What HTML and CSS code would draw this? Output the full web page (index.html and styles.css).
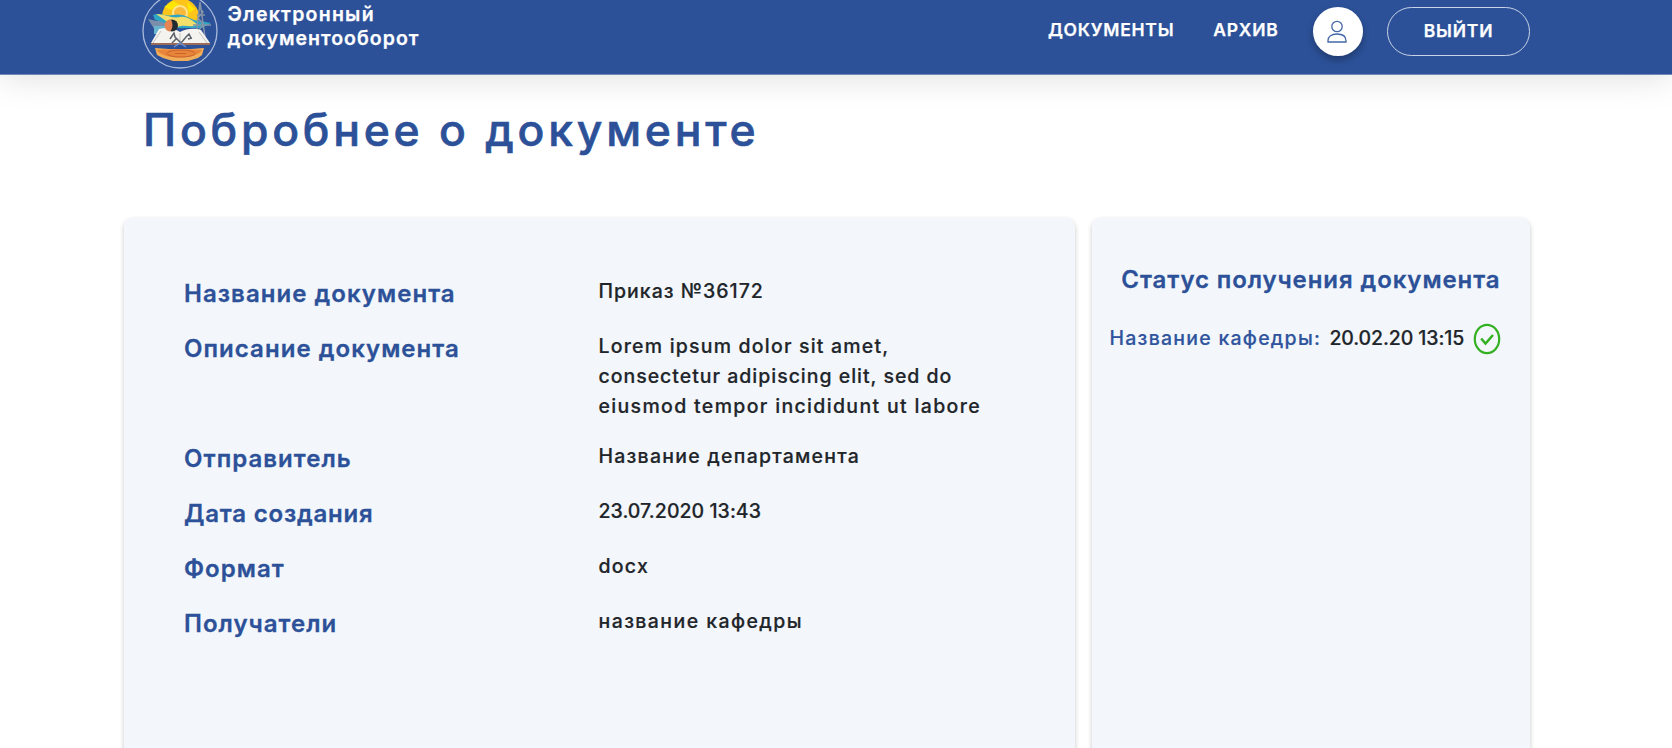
FILE: index.html
```html
<!DOCTYPE html>
<html lang="ru">
<head>
<meta charset="utf-8">
<title>Электронный документооборот</title>
<link rel="stylesheet" href="styles.css">
</head>
<body>
<header class="header">
  <div class="brand">
    <svg class="emblem" width="76" height="76" viewBox="0 0 76 76">
      <circle cx="38" cy="38" r="37" fill="none" stroke="#a9b9da" stroke-width="1.3"/>
      <path d="M20 23a18.500 18.500 0 0 1 37 2l-3 8H24z" fill="#fdc51a"/>
      <path d="M22 14l9-6 7 4-9 5zM45 9l8 7-6 4z" fill="#ffe600"/>
      <circle cx="38" cy="20" r="7" fill="#f9b83a" stroke="#ffe58a" stroke-width="2"/>
      <path d="M6 26l9 2 9-2 5 6-4 7H14z" fill="#7b8faa"/>
      <path d="M11 22c8-3 12 2 20 0 9-2 14 2 21 5l17 3-9 5H42c-6 2-16-5-29-8z" fill="#2fa5c4"/>
      <path d="M14 21c9 0 16 5 24 3 8-1 11 3 18 8-8 3-14-1-20 2-7-1-14-8-22-13z" fill="#f3df69"/>
      <path d="M12 33h15l-3 8H12z" fill="#69b4cf"/>
      <path d="M54 44l4-35 5 35M54 39l8-7-6-7 5-6-4-5M51 32h18M55 22h8" fill="none" stroke="#8593a6" stroke-width="1.500"/>
      <path d="M17 36c8-2 15-1 21 3 7-4 15-4 21-2l9 13H9z" fill="#f4f3ef"/>
      <path d="M38 40v10M19 38l-8 12M57 39l8 11" stroke="#c5c3bf"/>
      <path d="M9 50h59v2H9z" fill="#9b6a58"/>
      <circle cx="30" cy="32.500" r="6" fill="#232b31"/>
      <path d="M29 26.500a6 6 0 0 0-1 12c3-3 3-8 1-12z" fill="#e68452"/>
      <path d="M28 46l4-6 1 4 6 6M39 50l5-6 3-3 2 4M30 50l4-4M46 46l4-1" fill="none" stroke="#5b626a" stroke-width="1.500"/>
      <path d="M32 54l6-4 6 4" fill="none" stroke="#6e91ce" stroke-width="1.500"/>
      <path d="M13 55l14 1h22l13-1-2 7-4 3-10 3H31l-10-3-6-3z" fill="#f0ad5a"/>
      <path d="M15 57c10-1 35-1 45 0-5 10-40 10-45 0z" fill="#e8853a"/>
      <ellipse cx="39" cy="60.500" rx="14" ry="3.500" fill="none" stroke="#c9642b"/>
      <path d="M33 60.500h11" stroke="#cc6429"/>
    </svg>
    <div class="brand-name"><span class="b1">Электронный</span><span class="b2">документооборот</span></div>
  </div>
  <nav class="nav">
    <a class="nav-link">ДОКУМЕНТЫ</a>
    <a class="nav-link archive">АРХИВ</a>
    <a class="avatar">
      <svg width="20" height="24" viewBox="0 0 20 24" fill="none" stroke="#4467a7" stroke-width="1.300">
        <circle cx="10" cy="6.500" r="5.200"/>
        <path d="M1 22v-1.200C1 16.500 4.500 14 10 14s9 2.500 9 6.800V22z"/>
      </svg>
    </a>
    <a class="logout">ВЫЙТИ</a>
  </nav>
</header>
<main class="page">
  <h1 class="title">Побробнее о документе</h1>
  <div class="panels">
    <section class="panel details">
      <div class="row"><div class="label">Название документа</div><div class="value order">Приказ №36172</div></div>
      <div class="row"><div class="label">Описание документа</div><div class="value"><span class="l1">Lorem ipsum dolor sit amet,</span><br><span class="l2">consectetur adipiscing elit, sed do</span><br><span class="l3">eiusmod tempor incididunt ut labore</span></div></div>
      <div class="row"><div class="label">Отправитель</div><div class="value">Название департамента</div></div>
      <div class="row"><div class="label created">Дата создания</div><div class="value date">23.07.2020 13:43</div></div>
      <div class="row"><div class="label">Формат</div><div class="value">docx</div></div>
      <div class="row"><div class="label">Получатели</div><div class="value dept">название кафедры</div></div>
    </section>
    <section class="panel status">
      <h2 class="status-title">Статус получения документа</h2>
      <div class="status-row">
        <span class="status-name">Название кафедры:</span>
        <span class="status-date">20.02.20 13:15</span>
        <svg class="check" width="28" height="32" viewBox="0 0 28 32" fill="none" stroke="#34b022">
          <ellipse cx="14" cy="16" rx="12.200" ry="14.200" stroke-width="2.200"/>
          <path d="M8.200 15.500l4.300 5 7.500-8.500" stroke-width="2.500"/>
        </svg>
      </div>
    </section>
  </div>
</main>
</body>
</html>
```
FILE: styles.css
```css
* { box-sizing: border-box; }
html, body { height: 100%; }
body {
  margin: 0;
  overflow: hidden;
  background: #fff;
  color: #212529;
  font-family: Inter, "Open Sans", sans-serif;
  display: flex;
  flex-direction: column;
}
.header {
  height: 75px;
  flex: none;
  padding: 0 142px;
  display: flex;
  justify-content: space-between;
  background: #2c5198;
  border-bottom: 1px solid #7089b9;
  box-shadow: 0 0 36px rgba(0, 0, 0, .15);
  color: #fff;
  font-weight: 600;
  -webkit-text-stroke: .25px;
}
.brand { display: flex; }
.emblem { flex: none; margin-top: -7px; }
.brand-name {
  margin: 2px 0 0 9.5px;
  display: flex;
  flex-direction: column;
  font-size: 19.5px;
  line-height: 24px;
  white-space: nowrap;
}
.b1 { letter-spacing: 1.25px; }
.b2 { letter-spacing: 1.02px; }
.nav { display: flex; padding-top: 7px; }
.nav-link {
  margin-right: 39px;
  font-size: 17.5px;
  line-height: 46px;
  letter-spacing: .75px;
}
.archive { margin-right: 34px; }
.avatar {
  width: 50px;
  height: 49px;
  margin-right: 24.5px;
  display: flex;
  align-items: center;
  justify-content: center;
  border-radius: 50%;
  background: #fff;
  box-shadow: 0 4px 7px rgba(0, 0, 0, .28);
}
.avatar svg { margin-right: 1px; }
.logout {
  width: 143px;
  height: 49px;
  border: 1.3px solid #c9d3e7;
  border-radius: 25px;
  font-size: 17.5px;
  line-height: 46px;
  letter-spacing: .8px;
  text-align: center;
}
.page {
  flex: 1;
  display: flex;
  flex-direction: column;
  padding: 25px 142px 0 123.5px;
}
.title {
  margin: 0 0 58px;
  padding-left: 19.5px;
  color: #2c5198;
  font-size: 44.5px;
  font-weight: 500;
  line-height: 60px;
  letter-spacing: 3.75px;
  white-space: nowrap;
  -webkit-text-stroke: .6px;
}
.panels {
  flex: 1;
  display: flex;
  gap: 17.5px;
  margin-bottom: -30px;
}
.panel {
  border-radius: 9px;
  background: #f3f7fc;
  box-shadow: 0 2px 5px rgba(0, 0, 0, .22);
}
.details {
  flex: 1;
  padding: 58px 0 0 60.5px;
  display: flex;
  flex-direction: column;
  gap: 20px;
}
.row {
  display: grid;
  grid-template-columns: 414.5px 1fr;
  align-items: start;
}
.label {
  padding-top: 1px;
  color: #2c5198;
  font-size: 24px;
  font-weight: 600;
  line-height: 34px;
  letter-spacing: 1.05px;
  -webkit-text-stroke: .3px;
}
.created { letter-spacing: .8px; }
.value {
  font-size: 19.5px;
  font-weight: 500;
  line-height: 30px;
  letter-spacing: 1.24px;
  -webkit-text-stroke: .2px;
}
.order { letter-spacing: 1px; }
.dept { letter-spacing: 1.42px; }
.date { letter-spacing: .05px; }
.l1 { letter-spacing: 1.2px; }
.l2 { letter-spacing: .98px; }
.l3 { letter-spacing: 1.33px; }
.status {
  width: 438px;
  padding: 45px 29.5px 0 17.5px;
}
.status-title {
  margin: 0;
  color: #2c5198;
  font-size: 24px;
  font-weight: 600;
  line-height: 34px;
  letter-spacing: .92px;
  text-align: right;
  white-space: nowrap;
  -webkit-text-stroke: .3px;
}
.status-row {
  margin-top: 24px;
  display: flex;
  justify-content: space-between;
  font-size: 19.5px;
  font-weight: 500;
  line-height: 35px;
  white-space: nowrap;
  -webkit-text-stroke: .2px;
}
.status-name { color: #2f549d; letter-spacing: 1.25px; }
.status-date { letter-spacing: -.1px; }
.check { margin-top: 2px; }
```
